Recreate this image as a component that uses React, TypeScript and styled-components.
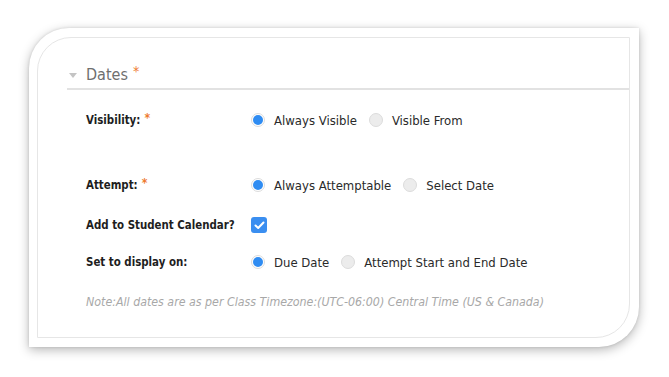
import React from "react";
import styled, { createGlobalStyle } from "styled-components";

const Global = createGlobalStyle`
  html, body { margin: 0; padding: 0; background: #ffffff; }
  body { font-family: "DejaVu Sans Condensed", "DejaVu Sans", sans-serif; }
`;

const Page = styled.div`
  width: 669px;
  height: 377px;
  padding: 28px 0 0 29px;
  box-sizing: border-box;
`;

const Card = styled.div`
  width: 610px;
  height: 319px;
  background: #fff;
  border-radius: 40px 0 40px 0;
  box-shadow: 0 3px 11px rgba(0, 0, 0, 0.28), 0 0 3px rgba(0, 0, 0, 0.12);
  padding: 9px 9px 9px 8px;
  box-sizing: border-box;
`;

const Inner = styled.div`
  height: 100%;
  border: 1px solid #e6e6e6;
  border-radius: 34px 0 34px 0;
  box-sizing: border-box;
  padding: 22px 0 0 29px;
`;

const Header = styled.div`
  display: flex;
  align-items: center;
  height: 28px;
  border-bottom: 2px solid #e2e2e2;
`;

const Caret = styled.span`
  width: 0;
  height: 0;
  border-left: 4px solid transparent;
  border-right: 4px solid transparent;
  border-top: 5px solid #c4c4c4;
  margin: 2px 9px 0 2px;
`;

const Title = styled.span`
  font-size: 16px;
  color: #6f6f6f;
`;

const Star = styled.span<{ $big?: boolean }>`
  color: #ee7a30;
  font-size: ${(p) => (p.$big ? "14px" : "12px")};
  margin-left: ${(p) => (p.$big ? "5px" : "4px")};
  position: relative;
  top: ${(p) => (p.$big ? "-3px" : "-2px")};
`;

const Row = styled.div<{ $mt: number }>`
  display: flex;
  align-items: center;
  height: 24px;
  margin-top: ${(p) => p.$mt}px;
  padding-left: 19px;
`;

const Label = styled.div`
  width: 165px;
  flex: none;
  font-size: 11.4px;
  font-weight: bold;
  color: #1e1e1e;
`;

const Options = styled.div`
  display: flex;
  align-items: center;
`;

const Option = styled.label`
  display: flex;
  align-items: center;
  margin-right: 12px;
  font-size: 13px;
  color: #2a2a2a;
`;

const Radio = styled.span<{ $on?: boolean }>`
  width: 14px;
  height: 14px;
  border-radius: 50%;
  box-sizing: border-box;
  border: 1px solid #dcdcdc;
  background: ${(p) => (p.$on ? "#fff" : "#ececec")};
  display: flex;
  align-items: center;
  justify-content: center;
  margin-right: 9px;
  &::after {
    content: "";
    display: ${(p) => (p.$on ? "block" : "none")};
    width: 10px;
    height: 10px;
    border-radius: 50%;
    background: #2f8cf2;
  }
`;

const Check = styled.span`
  width: 16px;
  height: 16px;
  border-radius: 3px;
  background: #3a8ef0;
  display: flex;
  align-items: center;
  justify-content: center;
`;

const Note = styled.div<{ $mt: number }>`
  margin-top: ${(p) => p.$mt}px;
  padding-left: 19px;
  font-size: 12.3px;
  font-style: italic;
  color: #a8a8a8;
  height: 24px;
  line-height: 24px;
`;

const RadioOpt = ({ on, children }: { on?: boolean; children: React.ReactNode }) => (
  <Option>
    <Radio $on={on} />
    {children}
  </Option>
);

export default function App() {
  return (
    <>
      <Global />
      <Page>
        <Card>
          <Inner>
            <Header>
              <Caret />
              <Title>Dates</Title>
              <Star $big>*</Star>
            </Header>
            <Row $mt={18}>
              <Label>
                Visibility:<Star>*</Star>
              </Label>
              <Options>
                <RadioOpt on>Always Visible</RadioOpt>
                <RadioOpt>Visible From</RadioOpt>
              </Options>
            </Row>
            <Row $mt={41}>
              <Label>
                Attempt:<Star>*</Star>
              </Label>
              <Options>
                <RadioOpt on>Always Attemptable</RadioOpt>
                <RadioOpt>Select Date</RadioOpt>
              </Options>
            </Row>
            <Row $mt={16}>
              <Label>Add to Student Calendar?</Label>
              <Check>
                <svg width="11" height="9" viewBox="0 0 11 9">
                  <path d="M1.5 4.5 L4.2 7 L9.5 1.5" fill="none" stroke="#fff" strokeWidth="2" strokeLinecap="round" strokeLinejoin="round" />
                </svg>
              </Check>
            </Row>
            <Row $mt={13}>
              <Label>Set to display on:</Label>
              <Options>
                <RadioOpt on>Due Date</RadioOpt>
                <RadioOpt>Attempt Start and End Date</RadioOpt>
              </Options>
            </Row>
            <Note $mt={16}>
              Note:All dates are as per Class Timezone:(UTC-06:00) Central Time (US &amp; Canada)
            </Note>
          </Inner>
        </Card>
      </Page>
    </>
  );
}
